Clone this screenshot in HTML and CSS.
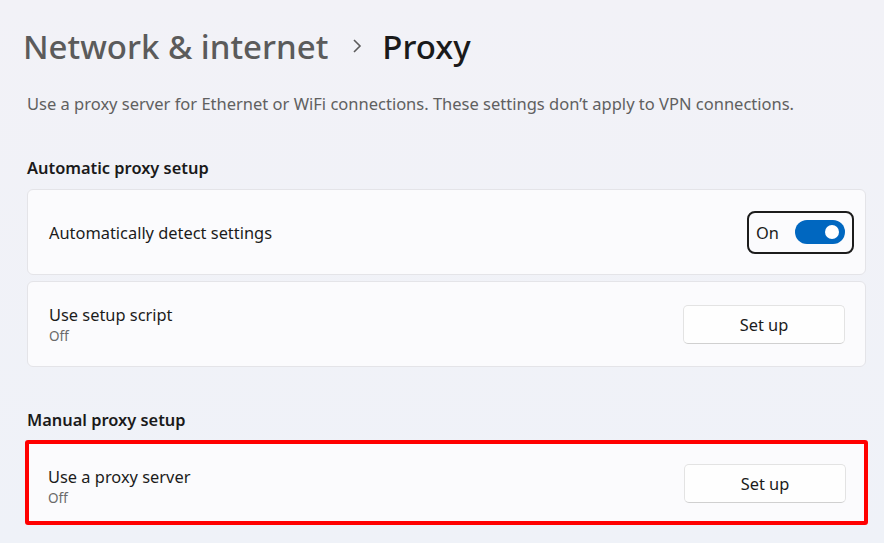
FILE: index.html
```html
<!DOCTYPE html>
<html lang="en">
<head>
  <meta charset="UTF-8">
  <link rel="stylesheet" href="styles.css">
  <title>Proxy</title>
</head>
<body>
  <div class="page">
    <h1 class="crumbs">
      <span class="crumb-parent">Network &amp; internet</span>
      <svg class="chevron" width="12" height="16" viewBox="0 0 12 16"><path d="M3 2 L9 8 L3 14" fill="none" stroke="#5b5b5b" stroke-width="1.6"/></svg>
      <span class="crumb-current">Proxy</span>
    </h1>
    <p class="intro">Use a proxy server for Ethernet or WiFi connections. These settings don’t apply to VPN connections.</p>

    <h2 class="section-title">Automatic proxy setup</h2>
    <div class="card">
      <div class="card-text">
        <div class="card-title">Automatically detect settings</div>
      </div>
      <div class="toggle-wrap">
        <span class="toggle-label">On</span>
        <span class="switch"><span class="knob"></span></span>
      </div>
    </div>
    <div class="card">
      <div class="card-text">
        <div class="card-title">Use setup script</div>
        <div class="card-sub">Off</div>
      </div>
      <button class="btn">Set up</button>
    </div>

    <h2 class="section-title manual">Manual proxy setup</h2>
    <div class="card highlight">
      <div class="card-text">
        <div class="card-title">Use a proxy server</div>
        <div class="card-sub">Off</div>
      </div>
      <button class="btn">Set up</button>
    </div>
  </div>
</body>
</html>
```

FILE: styles.css
```css
body {
  margin: 0;
  background: linear-gradient(180deg, #f2f2f7 0%, #eff2f8 100%);
  font-family: 'Noto Sans', 'Open Sans', sans-serif;
  color: #1b1b1b;
  height: 543px;
  overflow: hidden;
}

.page {
  padding: 0 18px 0 27px;
}

.crumbs {
  display: flex;
  align-items: center;
  margin: 0;
  padding-top: 22px;
  height: 48px;
  font-weight: 500;
  font-size: 33px;
  margin-left: -4px;
}

.crumb-parent {
  color: #5b5b5b;
}

.chevron {
  margin: 0 19px 0 23px;
}

.crumb-current {
  color: #1a1a1a;
}

.intro {
  margin: 22px 0 0;
  font-size: 16.5px;
  color: #606060;
}

.section-title {
  margin: 41px 0 10px;
  font-size: 16.4px;
  font-weight: 600;
  color: #1a1a1a;
}

.section-title.manual {
  margin-top: 41px;
  margin-bottom: 9px;
}

.card {
  display: flex;
  align-items: center;
  justify-content: space-between;
  height: 86px;
  box-sizing: border-box;
  padding: 0 20px 0 21px;
  margin-bottom: 6px;
  background: #fbfbfd;
  border: 1px solid #e4e4e8;
  border-radius: 6px;
}

.card-title {
  font-size: 16.4px;
  color: #1b1b1b;
}

.card-sub {
  font-size: 13.5px;
  color: #6a6a6a;
  margin-top: 1px;
}

.toggle-wrap {
  display: flex;
  align-items: center;
  width: 107px;
  height: 43px;
  box-sizing: border-box;
  border: 2px solid #1c1c1c;
  border-radius: 8px;
  padding: 0 7px 0 7px;
  margin-right: -9px;
  justify-content: space-between;
}

.toggle-label {
  font-size: 16.4px;
}

.switch {
  position: relative;
  width: 50px;
  height: 24px;
  border-radius: 12px;
  background: #0067c0;
}

.knob {
  position: absolute;
  right: 6px;
  top: 5px;
  width: 14px;
  height: 14px;
  border-radius: 50%;
  background: #fff;
}

.btn {
  width: 162px;
  height: 39px;
  font-family: inherit;
  font-size: 16.4px;
  color: #1b1b1b;
  background: #fefefe;
  border: 1px solid #e3e3e3;
  border-bottom-color: #d0d0d0;
  border-radius: 5px;
}

.highlight {
  border: 4px solid #ff0000;
  border-radius: 3px;
  height: 85px;
  margin-left: -2px;
  margin-right: -2px;
  padding-top: 2px;
  padding-left: 19px;
  padding-right: 18px;
}

.highlight .card-text {
  margin-top: 4px;
}
```
